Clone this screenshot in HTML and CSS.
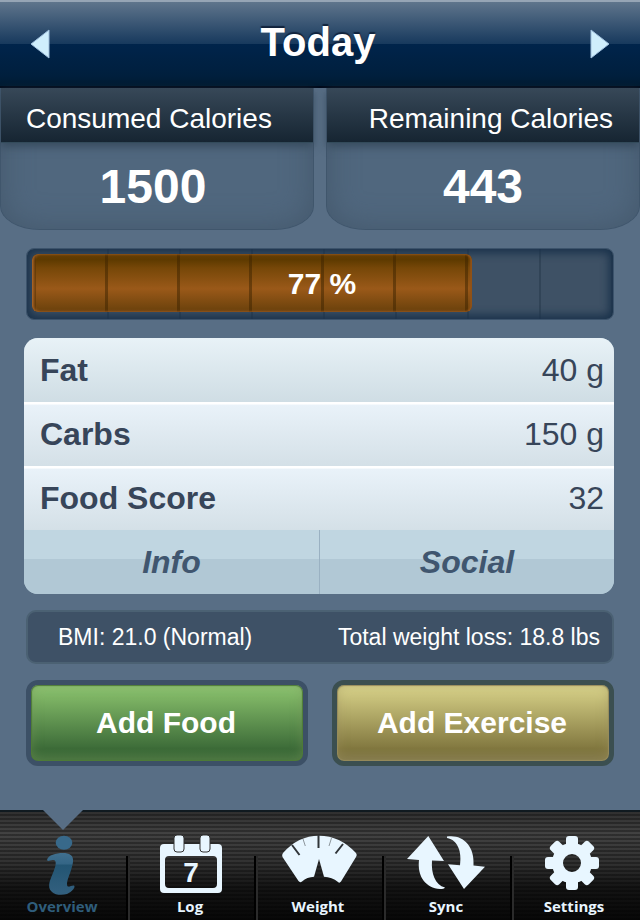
FILE: index.html
```html
<!DOCTYPE html>
<html lang="en">
<head>
    <meta charset="UTF-8">
    <meta name="viewport" content="width=device-width, initial-scale=1.0">
    <title>Today</title>
    <link rel="stylesheet" href="styles.css">
</head>
<body>
    <header class="topbar">
        <button type="button" class="arrow" aria-label="Previous day">
            <svg width="20" height="30" viewBox="0 0 20 30"><path d="M19 1V29L1 15Z"/></svg>
        </button>
        <h1>Today</h1>
        <button type="button" class="arrow" aria-label="Next day">
            <svg width="20" height="30" viewBox="0 0 20 30"><path d="M1 1V29L19 15Z"/></svg>
        </button>
    </header>

    <main>
        <div class="calories">
            <section class="panel">
                <h2>Consumed Calories</h2>
                <p>1500</p>
            </section>
            <section class="panel panel-right">
                <h2>Remaining Calories</h2>
                <p>443</p>
            </section>
        </div>

        <div class="content">
            <div class="progress" role="progressbar" aria-valuenow="77" aria-valuemin="0" aria-valuemax="100">
                <div class="progress-fill" style="width: 77%"></div>
                <span class="progress-text">77 %</span>
            </div>

            <div class="card">
                <table class="facts">
                    <tr><th scope="row">Fat</th><td>40 g</td></tr>
                    <tr><th scope="row">Carbs</th><td>150 g</td></tr>
                    <tr><th scope="row">Food Score</th><td>32</td></tr>
                </table>
                <div class="card-actions">
                    <button type="button">Info</button>
                    <button type="button">Social</button>
                </div>
            </div>

            <div class="stats">
                <span>BMI: 21.0 (Normal)</span>
                <span>Total weight loss: 18.8 lbs</span>
            </div>

            <div class="actions">
                <button type="button" class="add add-food">Add Food</button>
                <button type="button" class="add add-exercise">Add Exercise</button>
            </div>
        </div>
    </main>

    <nav class="tabbar">
        <a href="#overview" class="tab active">
            <svg class="icon" viewBox="0 0 80 64">
                <defs>
                    <linearGradient id="info" x1="0" y1="0" x2="0" y2="1">
                        <stop offset="0" stop-color="#40708f"/>
                        <stop offset="0.25" stop-color="#356686"/>
                        <stop offset="0.3" stop-color="#235573"/>
                        <stop offset="1" stop-color="#33607f"/>
                    </linearGradient>
                </defs>
                <ellipse cx="42" cy="10.7" rx="8.3" ry="7" fill="#38698a"/>
                <path fill="url(#info)" d="M25 28C26 23 34 21 41 21C47 21 52 23 51 30C50 38 45 47 45 52C45 57 49 53 52 53.5C54 55 50 60 45 62C40 63.5 33 63 30 60C24 55 29 46 31 41C33 36 36 28 31 28C28 28 26 30 25 28Z"/>
            </svg>
            <span>Overview</span>
        </a>
        <a href="#log" class="tab">
            <svg class="icon" viewBox="0 0 80 64">
                <path fill-rule="evenodd" d="M14 12H68Q72 12 72 16V57Q72 61 68 61H14Q10 61 10 57V16Q10 12 14 12ZM19 24Q15 24 15 28V52Q15 56 19 56H63Q67 56 67 52V28Q67 24 63 24Z"/>
                <rect class="ring" x="24" y="3" width="10" height="17" rx="3"/>
                <rect class="ring" x="50" y="3" width="10" height="17" rx="3"/>
                <text x="41" y="50" text-anchor="middle">7</text>
            </svg>
            <span>Log</span>
        </a>
        <a href="#weight" class="tab">
            <svg class="icon" viewBox="0 0 80 64">
                <path d="M5 21Q20 3.7 41 3.7Q62 3.7 78 21Q79.500 23 78 25L63 49.5Q61.5 51.5 60 50Q54 45 46 44.7L41 27L36 44.7Q29 45 24 49.5Q22 51 20.5 49L4.5 25Q3.5 23 5 21Z"/>
                <path class="tick" d="M40.5 3V16M14 13L21.5 23M65 12L57.5 21.5"/>
                <path class="tick thin" d="M25 7L27.3 14M53.5 6L51 14"/>
            </svg>
            <span>Weight</span>
        </a>
        <a href="#sync" class="tab">
            <svg class="icon" viewBox="0 0 80 64">
                <path d="M22.3 4L38 29L26 28.5C25 41 29 53 39 55.5Q38 57 34 57C20 56 11 45 13 28L1 27Z"/>
                <path d="M41 4.5C56 2 69 13 67.5 33.5L79 34.7L58 57L42 32.3L54 33.3C56 20 52 8 41 6Z"/>
            </svg>
            <span>Sync</span>
        </a>
        <a href="#settings" class="tab">
            <svg class="icon" viewBox="0 0 80 64">
                <circle class="hub" cx="38" cy="31" r="14.5"/>
                <g id="teeth">
                    <rect x="32" y="4" width="12" height="13" rx="3"/>
                    <rect x="32" y="45" width="12" height="13" rx="3"/>
                    <rect x="11" y="25" width="13" height="12" rx="3"/>
                    <rect x="52" y="25" width="13" height="12" rx="3"/>
                </g>
                <use href="#teeth" transform="rotate(45 38 31)"/>
            </svg>
            <span>Settings</span>
        </a>
    </nav>
</body>
</html>
```
FILE: styles.css
```css
* {
    box-sizing: border-box;
}
body {
    margin: 0;
    min-height: 100vh;
    display: flex;
    flex-direction: column;
    background-color: #586e85;
    color: white;
    font-family: "Liberation Sans", Arial, sans-serif;
}
button {
    border: none;
    padding: 0;
    background: none;
    color: inherit;
    font-family: inherit;
    cursor: pointer;
}
h1, h2, p {
    margin: 0;
}

/* top bar */
.topbar {
    display: flex;
    justify-content: space-between;
    align-items: center;
    height: 88px;
    padding: 0 30px;
    border-top: 2px solid #96a5b5;
    border-bottom: 2px solid #000b1c;
    background: linear-gradient(#5f758c, #17395d 50%, #00244b 50%, #001f3d 88%, #001b31);
}
.topbar h1 {
    font-size: 40px;
    line-height: 44px;
    padding: 0 4px 4px 0;
    text-shadow: 0 -2px 1px #11233c;
}
.arrow svg {
    display: block;
    fill: #cfeefc;
    stroke: #9dbddb;
    stroke-width: 1;
}

/* calorie panels */
.calories {
    display: grid;
    grid-template-columns: 1fr 1fr;
    gap: 12px;
}
.panel {
    height: 142px;
    border: 1px solid #40566c;
    border-top: none;
    border-radius: 0 0 40px 40px / 0 0 24px 24px;
    background-color: #50677e;
    box-shadow: inset 0 0 30px #44586c;
    text-align: center;
}
.panel h2 {
    height: 55px;
    padding: 6px 26px 0 25px;
    border-bottom: 1px solid #334b5b;
    background: linear-gradient(#374858, #162532);
    box-shadow: 0 4px 8px #384c5f;
    font-size: 28px;
    font-weight: normal;
    line-height: 50px;
    text-align: left;
    white-space: nowrap;
}
.panel-right h2 {
    text-align: right;
}
.panel p {
    padding-right: 8px;
    font-size: 48px;
    font-weight: bold;
    line-height: 88px;
}
.panel-right p {
    padding-right: 0;
}

.content {
    padding: 18px 26px 24px 24px;
}

/* progress bar */
.progress {
    position: relative;
    height: 72px;
    margin: 0 0 18px 2px;
    padding: 5px 10px 8px 5px;
    border: 1px solid #3c536b;
    border-radius: 8px;
    background:
        repeating-linear-gradient(90deg, transparent 0, transparent 70px, #314457 70px, #314457 72px) 10px 0,
        #3e5165;
    box-shadow: inset 0 0 8px 4px #1a324b;
}
.progress-fill {
    height: 58px;
    border-radius: 6px;
    background:
        linear-gradient(90deg, transparent 69px, rgba(60, 35, 0, 0.5) 69px) 4px 0,
        linear-gradient(#643e06, #5e3a00 10%, #764708 24%, #9a5919 60%, #70440d 94%, #6b4212);
    background-size: 72px 100%, auto;
    box-shadow: inset 2px 0 3px #a96427, inset -2px 0 2px #915217;
}
.progress-text {
    position: absolute;
    inset: 0;
    padding-left: 4px;
    font-size: 30px;
    font-weight: bold;
    line-height: 70px;
    text-align: center;
}

/* nutrition card */
.card {
    margin-bottom: 16px;
    border-radius: 14px;
    overflow: hidden;
    background-color: #b1c8d5;
    color: #374559;
}
.facts {
    width: 100%;
    border-collapse: collapse;
    font-size: 32px;
}
.facts tr {
    height: 64px;
    background: linear-gradient(white 3%, #e9f2f9 5%, #d4e0e7);
}
.facts tr:first-child {
    background: linear-gradient(#e8f2f7, #cfdde4);
}
.facts th, .facts td {
    padding: 0 10px 0 16px;
    line-height: 64px;
}
.facts th {
    text-align: left;
}
.facts td {
    text-align: right;
}
.card-actions {
    display: grid;
    grid-template-columns: 1fr 1fr;
}
.card-actions button {
    height: 64px;
    background: linear-gradient(#c0d6e1 45%, #b1c8d5 45%);
    color: #40566f;
    font-size: 32px;
    font-style: italic;
    font-weight: bold;
}
.card-actions button + button {
    border-left: 1px solid #9ab1c2;
}

.stats {
    display: flex;
    justify-content: space-between;
    align-items: center;
    height: 54px;
    margin: 0 0 16px 2px;
    padding: 0 12px 0 30px;
    border: 2px solid #4b6173;
    border-radius: 10px;
    background-color: #3e5166;
    font-size: 23px;
    white-space: nowrap;
}

/* add buttons */
.actions {
    display: grid;
    grid-template-columns: 1fr 1fr;
    gap: 24px;
    margin-left: 2px;
}
.add {
    height: 86px;
    padding-right: 2px;
    border: 5px solid #3c5066;
    border-radius: 12px;
    font-size: 30px;
    font-weight: bold;
}
.add-food {
    background-image: linear-gradient(#8fc673, #7cb263 18%, #3c6b38 84%, #43703d);
    box-shadow: inset 0 0 1px 1px #4e7a37, inset 0 0 12px rgba(120, 150, 90, 0.5);
}
.add-exercise {
    border-color: #3b4f50;
    background-image: linear-gradient(#dbd68d, #c5be78 20%, #81773f 84%, #81784a);
    box-shadow: inset 0 0 1px 1px #968b5c, inset 0 0 12px rgba(160, 145, 95, 0.5);
}

/* tab bar */
.tabbar {
    display: grid;
    grid-template-columns: repeat(5, 1fr);
    height: 110px;
    margin-top: auto;
    border-top: 2px solid #101a20;
    background:
        repeating-linear-gradient(transparent 0, transparent 2px, rgba(0, 0, 0, 0.3) 2px, rgba(0, 0, 0, 0.3) 4px),
        linear-gradient(#303030, #424242 20%, #303030 48%, #141414 70%, #080808);
}
.tab {
    position: relative;
    display: flex;
    flex-direction: column;
    align-items: center;
    padding: 20px 4px 0 0;
    background:
        linear-gradient(black, black) right bottom / 2px 64px no-repeat,
        linear-gradient(#2b2b2b, #2b2b2b) left bottom / 2px 64px no-repeat;
    color: #e8f5ff;
    font-family: "Open Sans", "Noto Sans", sans-serif;
    font-size: 15px;
    font-weight: bold;
    line-height: 20px;
    text-decoration: none;
}
.tab:first-child {
    background: linear-gradient(black, black) right bottom / 2px 64px no-repeat;
}
.tab:last-child {
    background: linear-gradient(#2b2b2b, #2b2b2b) left bottom / 2px 64px no-repeat;
}
.tab.active {
    color: #2f5d7b;
}
/* notch above the selected tab */
.tab.active::before {
    content: "";
    position: absolute;
    top: -2px;
    left: calc(50% - 21px);
    width: 40px;
    height: 20px;
    background-color: #586e85;
    clip-path: polygon(0 0, 100% 0, 50% 100%);
}
.icon {
    display: block;
    width: 80px;
    height: 64px;
    fill: #e8f6ff;
}
.icon text {
    font: bold 28px "Liberation Sans", Arial, sans-serif;
}
.ring {
    stroke: #303030;
    stroke-width: 1;
}
.tick {
    fill: none;
    stroke: #303539;
    stroke-width: 2;
}
.thin {
    stroke: #8d969c;
    stroke-width: 1;
}
.hub {
    fill: none;
    stroke: #e8f6ff;
    stroke-width: 11;
}
```
